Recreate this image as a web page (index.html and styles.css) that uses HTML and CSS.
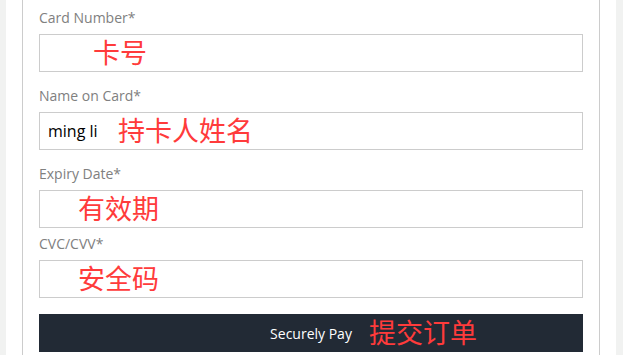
FILE: index.html
```html
<html lang="en">
<head>
    <meta charset="UTF-8">
    <meta name="viewport" content="width=device-width, initial-scale=1.0">
    <title> Payment </title>
    <link rel="stylesheet" href="styles.css">
</head>
<body>
    <div class="page">
        <form class="card">
            <div class="field">
                <label for="number">Card Number*</label>
                <div class="box">
                    <input type="text" id="number">
                    <span class="note note-number">卡号</span>
                </div>
            </div>
            <div class="field">
                <label for="name">Name on Card*</label>
                <div class="box">
                    <input type="text" id="name" value="ming li">
                    <span class="note note-name">持卡人姓名</span>
                </div>
            </div>
            <div class="field field-tight">
                <label for="expiry">Expiry Date*</label>
                <div class="box">
                    <input type="text" id="expiry">
                    <span class="note">有效期</span>
                </div>
            </div>
            <div class="field">
                <label for="cvc">CVC/CVV*</label>
                <div class="box">
                    <input type="text" id="cvc">
                    <span class="note">安全码</span>
                </div>
            </div>
            <div class="box">
                <button type="button" class="pay">Securely Pay</button>
                <span class="note note-pay">提交订单</span>
            </div>
        </form>
    </div>
</body>
</html>
```

FILE: styles.css
```css
body {
    margin: 0;
    background-color: #f1f2f1;
    font-family: "Open Sans", Arial, sans-serif;
}

.page {
    width: 578px;
    margin: 0 7px 0 6px;
    padding: 0 16px;
    background-color: #ffffff;
    height: 355px;
}

.card {
    margin: 0;
    padding: 8px 16px 0;
    border-left: 1px solid #cccccc;
    border-right: 1px solid #cccccc;
    height: 347px;
}

.field {
    margin-bottom: 14px;
}

.field-tight {
    margin-bottom: 6px;
}

label {
    display: block;
    font-size: 14px;
    line-height: 20px;
    color: #808080;
    margin-bottom: 6px;
}

.box {
    position: relative;
}

input {
    display: block;
    box-sizing: border-box;
    width: 100%;
    height: 38px;
    margin: 0;
    padding: 0 8px;
    border: 1px solid #cccccc;
    border-radius: 0;
    font-family: "Open Sans", Arial, sans-serif;
    font-size: 16px;
    color: #000000;
    background: #ffffff;
}

.pay {
    display: block;
    width: 100%;
    height: 38px;
    margin-top: 16px;
    border: none;
    border-radius: 0;
    background-color: #222a35;
    color: #ffffff;
    font-family: "Open Sans", Arial, sans-serif;
    font-size: 14px;
    cursor: pointer;
}

.note {
    position: absolute;
    left: 39px;
    top: 50%;
    margin-top: -2px;
    transform: translateY(-50%);
    font-family: "Noto Sans CJK SC", sans-serif;
    font-size: 27px;
    line-height: 1;
    color: #ff3b3b;
    pointer-events: none;
}

.note-number {
    left: 54px;
}

.note-name {
    left: 79px;
}

.note-pay {
    left: 330px;
}
```
